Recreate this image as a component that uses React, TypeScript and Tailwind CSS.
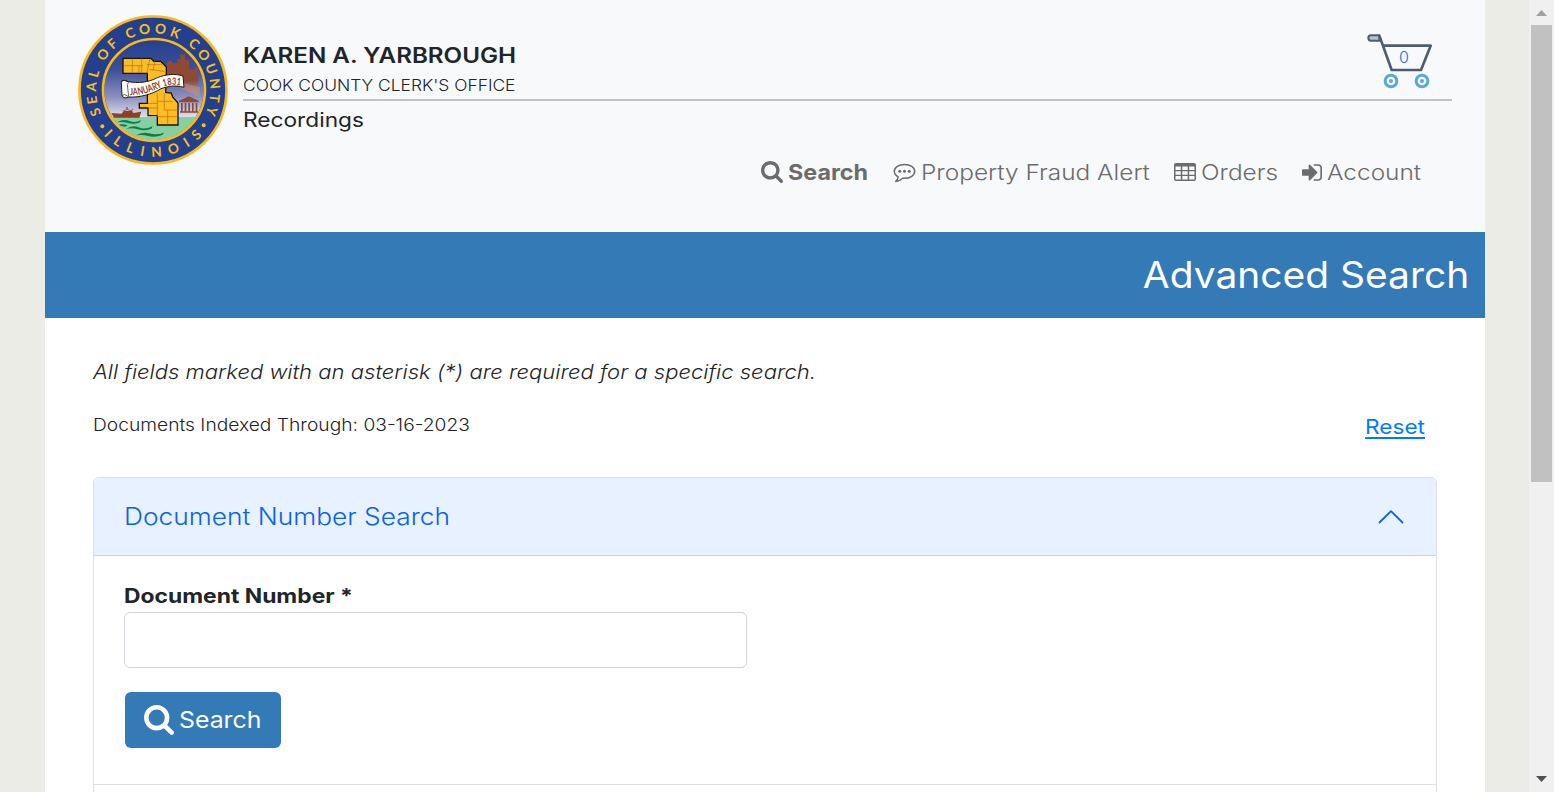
import React from "react";

function SearchIcon({ className }: { className: string }) {
  return (
    <svg viewBox="64 128 1664 1664" fill="currentColor" className={className}>
      <path d="M1216 832q0-185-131.5-316.500t-316.500-131.500-316.500 131.500-131.500 316.500 131.500 316.500 316.500 131.500 316.500-131.500 131.500-316.500zm512 832q0 52-38 90t-90 38q-54 0-90-38l-343-342q-179 124-399 124-143 0-273.500-55.500t-225-150-150-225-55.500-273.500 55.500-273.500 150-225 225-150 273.500-55.500 273.500 55.500 225 150 150 225 55.500 273.500q0 220-124 399l343 343q37 37 37 90z" />
    </svg>
  );
}

function CommentIcon() {
  return (
    <svg viewBox="0 0 23 20" className="h-5 w-[23px]" fill="none">
      <path
        d="M11.5 1.4C5.800 1.400 1.300 4.500 1.300 8.300c0 2.300 1.500 4.200 3.900 5.500-.3 1.700-1 3.200-2.400 4.600 2.900-.4 5.200-1.500 6.800-3.200.6.1 1.200.1 1.900.1 5.700 0 10.200-3.100 10.200-7s-4.500-6.900-10.200-6.900Z"
        stroke="currentColor"
        strokeWidth="1.500"
        strokeLinejoin="round"
      />
      <circle cx="6.800" cy="8.300" r="1.500" fill="currentColor" />
      <circle cx="11.500" cy="8.300" r="1.500" fill="currentColor" />
      <circle cx="16.200" cy="8.300" r="1.500" fill="currentColor" />
    </svg>
  );
}

function TableIcon() {
  return (
    <svg viewBox="0 0 22 18" className="-mt-[2px] h-[18px] w-[22px]">
      <path
        fill="currentColor"
        fillRule="evenodd"
        d="M2 0h18a2 2 0 0 1 2 2v14a2 2 0 0 1-2 2H2a2 2 0 0 1-2-2V2a2 2 0 0 1 2-2ZM1.500 3.500v3.500h5.300V3.500ZM8.300 3.500v3.500h5.400V3.500ZM15.200 3.500v3.500h5.300V3.500ZM1.500 8.300v3.400h5.300V8.300ZM8.300 8.300v3.400h5.400V8.300ZM15.200 8.300v3.400h5.300V8.300ZM1.500 13v3.500h5.300V13ZM8.300 13v3.500h5.400V13ZM15.200 13v3.500h5.300V13Z"
      />
    </svg>
  );
}

function SignInIcon() {
  return (
    <svg viewBox="0 256 1536 1280" fill="currentColor" className="-mt-px h-[17px] w-5">
      <path d="M1184 896q0 26-19 45l-544 544q-19 19-45 19t-45-19-19-45v-288h-448q-26 0-45-19t-19-45v-384q0-26 19-45t45-19h448v-288q0-26 19-45t45-19 45 19l544 544q19 19 19 45zm352-352v704q0 119-84.500 203.500t-203.500 84.500h-320q-13 0-22.500-9.500t-9.500-22.500q0-4-1-20t-.5-26.500 3-23.500 10-19.500 20.500-6.500h320q66 0 113-47t47-113v-704q0-66-47-113t-113-47h-312l-11.500-1-11.500-3-8-5.500-7-9-2-13.500q0-4-1-20t-.5-26.500 3-23.500 10-19.500 20.500-6.500h320q119 0 203.500 84.500t84.500 203.500z" />
    </svg>
  );
}

function Seal() {
  return (
    <svg viewBox="24 21 450 450" className="h-[150px] w-[150px]">
      <defs>
        <linearGradient id="sky" x1="0" y1="0" x2="0" y2="1">
          <stop offset="0" stopColor="#233f8e" />
          <stop offset="0.3" stopColor="#3d4f98" />
          <stop offset="0.55" stopColor="#8b8fc0" />
          <stop offset="0.78" stopColor="#f0eef6" />
        </linearGradient>
        <linearGradient id="town" x1="0" y1="0" x2="0" y2="1">
          <stop offset="0" stopColor="#8f4a35" />
          <stop offset="0.65" stopColor="#8f4a35" />
          <stop offset="1" stopColor="#b9a0b0" stopOpacity="0.500" />
        </linearGradient>
        <clipPath id="disc">
          <circle cx="252" cy="246" r="149" />
        </clipPath>
        <path id="arcTop" d="M94.200 318A171 171 0 1 1 409.200 309" />
        <path id="arcBottom" d="M101 382A202 202 0 0 0 398 381" />
      </defs>
      <circle cx="249" cy="246" r="220.500" fill="#233f8e" stroke="#f9b81c" strokeWidth="8" />
      <g clipPath="url(#disc)">
        <rect x="95" y="90" width="320" height="320" fill="url(#sky)" />
        <path d="M290 166l12-10 5 10h16v-12h8v-18l8 6 6-8v22h13v28h16v-6h10v86l-52-26-42-10Z" fill="url(#town)" />
        <path d="M330 240l60 28v-30l-50-12Z" fill="#bd8f86" opacity="0.600" />
        <path d="M95 327h320v90H95Z" fill="#86cfa0" />
        <path d="M327 278l30-13 29 13v5h-59ZM333 285h5v26h-5ZM344 285h5v26h-5ZM355 285h5v26h-5ZM366 285h5v26h-5ZM377 285h5v26h-5ZM330 310h54v4h-54Z" fill="#8f4a35" />
        <path d="M124 315l30 2 8-8h24l4 6 24-4-6 18h-76Z" fill="#8f3f28" />
        <path d="M158 309l12-4 1-8 2 8 14 4M184 311l4-9" stroke="#7a3a2a" strokeWidth="2" fill="none" />
        <path d="M142 343q18-12 36-4t36-3l-6 8q-18 6-34 1t-32-2ZM168 363q20-14 38-5t42-4l-4 8q-22 8-40 2t-36-1ZM198 382q20-12 40-6t44-2l-5 7q-22 8-42 3t-37-2ZM145 352q10-6 28 0l-8 4Z" fill="#0f7a4c" />
        <path
          d="M159 151h83l10 9h20l17 17v14l-2 62 17 2 4 12 16 18v66h-62v-28h-28v-23h-26v-14h24v-90h-73Z"
          fill="#fbbd22"
          stroke="#16120e"
          strokeWidth="4"
        />
        <path
          d="M187 151v44M215 151v44M161 173h58M207 195v-22M240 152l-10 44M230 170h44M238 184l44 6M254 160l-4 28M234 286h28M262 256v70M262 280h46M283 256v50M283 306h40M262 326h60M293 306v44M234 300h28"
          stroke="#b46a1d"
          strokeWidth="2"
          fill="none"
        />
        <path
          d="M163 217q-9-2-9 7l2 38q3 8 9 8l12-3c30 2 70-8 96-25 24-8 44-11 69-4l-3-34c-24-8-52-5-77 5-28 15-58 17-87 12Z"
          fill="#fff"
          stroke="#201812"
          strokeWidth="3"
        />
        <path d="M154 220q8-6 17-1t1 10l4 37M156 262q8-6 18 3" stroke="#201812" strokeWidth="2" fill="none" />
        <path id="ribbon" d="M180 262C215 262 245 251 272 239C294 230 315 228 337 234" fill="none" />
        <text className="fill-[#8f3f28] font-[Lato,sans-serif] text-[30px] font-bold">
          <textPath href="#ribbon" textLength="156" lengthAdjust="spacingAndGlyphs">
            JANUARY 1831
          </textPath>
        </text>
      </g>
      <circle cx="252" cy="246" r="153" fill="none" stroke="#f9b81c" strokeWidth="8" />
      <text className="fill-[#f9c01c] font-[Lato,sans-serif] text-[41px] font-bold">
        <textPath href="#arcTop" textLength="682">
          SEAL OF COOK COUNTY
        </textPath>
      </text>
      <text className="fill-[#f9c01c] font-[Lato,sans-serif] text-[41px] font-bold">
        <textPath href="#arcBottom" textLength="332">
          ILLINOIS
        </textPath>
      </text>
      <circle cx="97" cy="355" r="6" fill="#f9c01c" />
      <circle cx="401" cy="352" r="6" fill="#f9c01c" />
    </svg>
  );
}

function Cart() {
  return (
    <div className="relative h-[56px] w-[66px]">
      <svg viewBox="50 27 198 168" className="h-[56px] w-[66px]">
        <g fill="none" stroke="#4d5d6f" strokeWidth="8" strokeLinejoin="round" strokeLinecap="round">
          <path d="M86 31H62a8 8 0 0 0 0 16h26Z" fill="#b9c0c9" strokeWidth="6" />
          <path d="M87 32l37 103h88l29-73H98" />
        </g>
        <g fill="none" stroke="#5aa9dd" strokeWidth="9">
          <circle cx="122" cy="168" r="17.500" />
          <circle cx="215" cy="168" r="17.500" />
        </g>
        <circle cx="122" cy="168" r="6" fill="#5aa9dd" />
        <circle cx="215" cy="168" r="6" fill="#5aa9dd" />
      </svg>
      <span className="absolute left-[32px] top-[13px] text-[16px] font-light leading-[21px] text-[#0d6efd]">0</span>
    </div>
  );
}

export default function App() {
  return (
    <div className="flex h-[792px] w-[1554px] overflow-hidden bg-[#ebece5] font-[Inter,sans-serif] text-[#212529]">
      <div className="ml-[45px] flex w-[1440px] shrink-0 flex-col bg-white">
        <header className="flex h-[232px] shrink-0 flex-col bg-[#f8f9fb]">
          <div className="flex h-[156px] shrink-0">
            <div className="ml-[33px] mt-[15px] w-[165px]">
              <Seal />
            </div>
            <div className="mt-[39px] w-[1209px]">
              <div className="flex h-[62px] justify-between border-b-2 border-[#c1c2c5]">
                <div className="flex w-[273px] flex-col whitespace-nowrap">
                  <div className="h-8 w-fit origin-left scale-x-[1.15] text-[21px] font-semibold leading-[34px]">KAREN A. YARBROUGH</div>
                  <div className="w-fit origin-left scale-x-[1.088] text-[16px] font-light leading-7">COOK COUNTY CLERK'S OFFICE</div>
                </div>
                <div className="-mt-[5px] mr-[19px]">
                  <Cart />
                </div>
              </div>
              <div className="w-fit origin-left scale-x-[1.135] text-[20px] leading-[38px]">Recordings</div>
            </div>
          </div>
          <nav className="flex h-[33px] items-center gap-6 whitespace-nowrap pl-[716px] text-[22px] font-light leading-[33px] text-[#6c6c6c]">
            <a className="flex items-center gap-[5px] font-bold">
              <SearchIcon className="-mt-px h-[22px] w-[22px]" />
              <span className="w-[81px]">
                <span className="inline-block origin-left scale-x-[1.06]">Search</span>
              </span>
            </a>
            <a className="flex items-center gap-[5px]">
              <CommentIcon />
              <span className="w-[229px]">
                <span className="inline-block origin-left scale-x-[1.11]">Property Fraud Alert</span>
              </span>
            </a>
            <a className="flex items-center gap-[5px]">
              <TableIcon />
              <span className="w-[77px]">
                <span className="inline-block origin-left scale-x-[1.11]">Orders</span>
              </span>
            </a>
            <a className="flex items-center gap-[5px]">
              <SignInIcon />
              <span className="w-[94px]">
                <span className="inline-block origin-left scale-x-[1.11]">Account</span>
              </span>
            </a>
          </nav>
        </header>
        <div className="flex h-[86px] shrink-0 items-center justify-end bg-[#347ab6] pr-4 text-white">
          <h1 className="origin-right scale-x-[1.052] whitespace-nowrap text-[37px]">Advanced Search</h1>
        </div>
        <main className="flex flex-col px-12 pt-[38px]">
          <p className="w-fit origin-left scale-x-[1.102] whitespace-nowrap text-[20px] font-light italic leading-8">
            All fields marked with an asterisk (*) are required for a specific search.
          </p>
          <div className="mt-[20px] flex h-[34px] justify-between whitespace-nowrap pr-[12.5px]">
            <div className="w-fit origin-left scale-x-[1.098] text-[17.5px] font-light leading-[34px]">Documents Indexed Through: 03-16-2023</div>
            <a className="origin-right scale-x-[1.13] text-[20px] leading-[38px] text-[#007bff] underline decoration-2 underline-offset-[3px]">
              Reset
            </a>
          </div>
          <section className="mt-[35px] h-[340px] rounded-t-[6px] border border-[#dcdfe3]">
            <button className="flex h-[78px] w-full items-center justify-between rounded-t-[5px] border-b border-[#c9d5e5] bg-[#e7f1ff] pl-[30px] pr-[31px] text-left text-[#0c63e4]">
              <span className="origin-left scale-x-[1.12] whitespace-nowrap text-[23.5px] font-light">Document Number Search</span>
              <svg viewBox="0 0 28 16" className="h-4 w-7" fill="none">
                <path d="M2.500 13.500 14 2.200 25.500 13.500" stroke="#0c63e4" strokeWidth="1.800" strokeLinecap="round" strokeLinejoin="round" />
              </svg>
            </button>
            <div className="flex h-[229px] flex-col items-start border-b border-[#dcdfe3] pl-[30px] pt-[24px]">
              <label className="origin-left scale-x-[1.143] whitespace-nowrap text-[20px] font-bold leading-8">Document Number *</label>
              <input className="h-[56px] w-[623px] rounded-md border border-[#ced4da] bg-white outline-none" />
              <button className="ml-px mt-6 flex h-[56px] w-[156px] items-center gap-[5px] rounded-md bg-[#347ab6] pl-[19px] text-white">
                <SearchIcon className="h-[30px] w-[30px]" />
                <span className="origin-left scale-x-[1.08] text-[23px]">Search</span>
              </button>
            </div>
          </section>
        </main>
      </div>
      <div className="ml-11 flex h-full w-[25px] flex-col items-center bg-[#f0f0f0]">
        <svg viewBox="0 0 11 6" className="mt-[10px] h-[6px] w-[11px]">
          <path d="M5.500 0 11 6H0Z" fill="#a0a0a0" />
        </svg>
        <div className="mt-[9px] h-[457px] w-[21px] bg-[#c1c1c1]" />
        <svg viewBox="0 0 11 6" className="mb-[10px] mt-auto h-[6px] w-[11px]">
          <path d="M0 0h11L5.500 6Z" fill="#505050" />
        </svg>
      </div>
    </div>
  );
}
